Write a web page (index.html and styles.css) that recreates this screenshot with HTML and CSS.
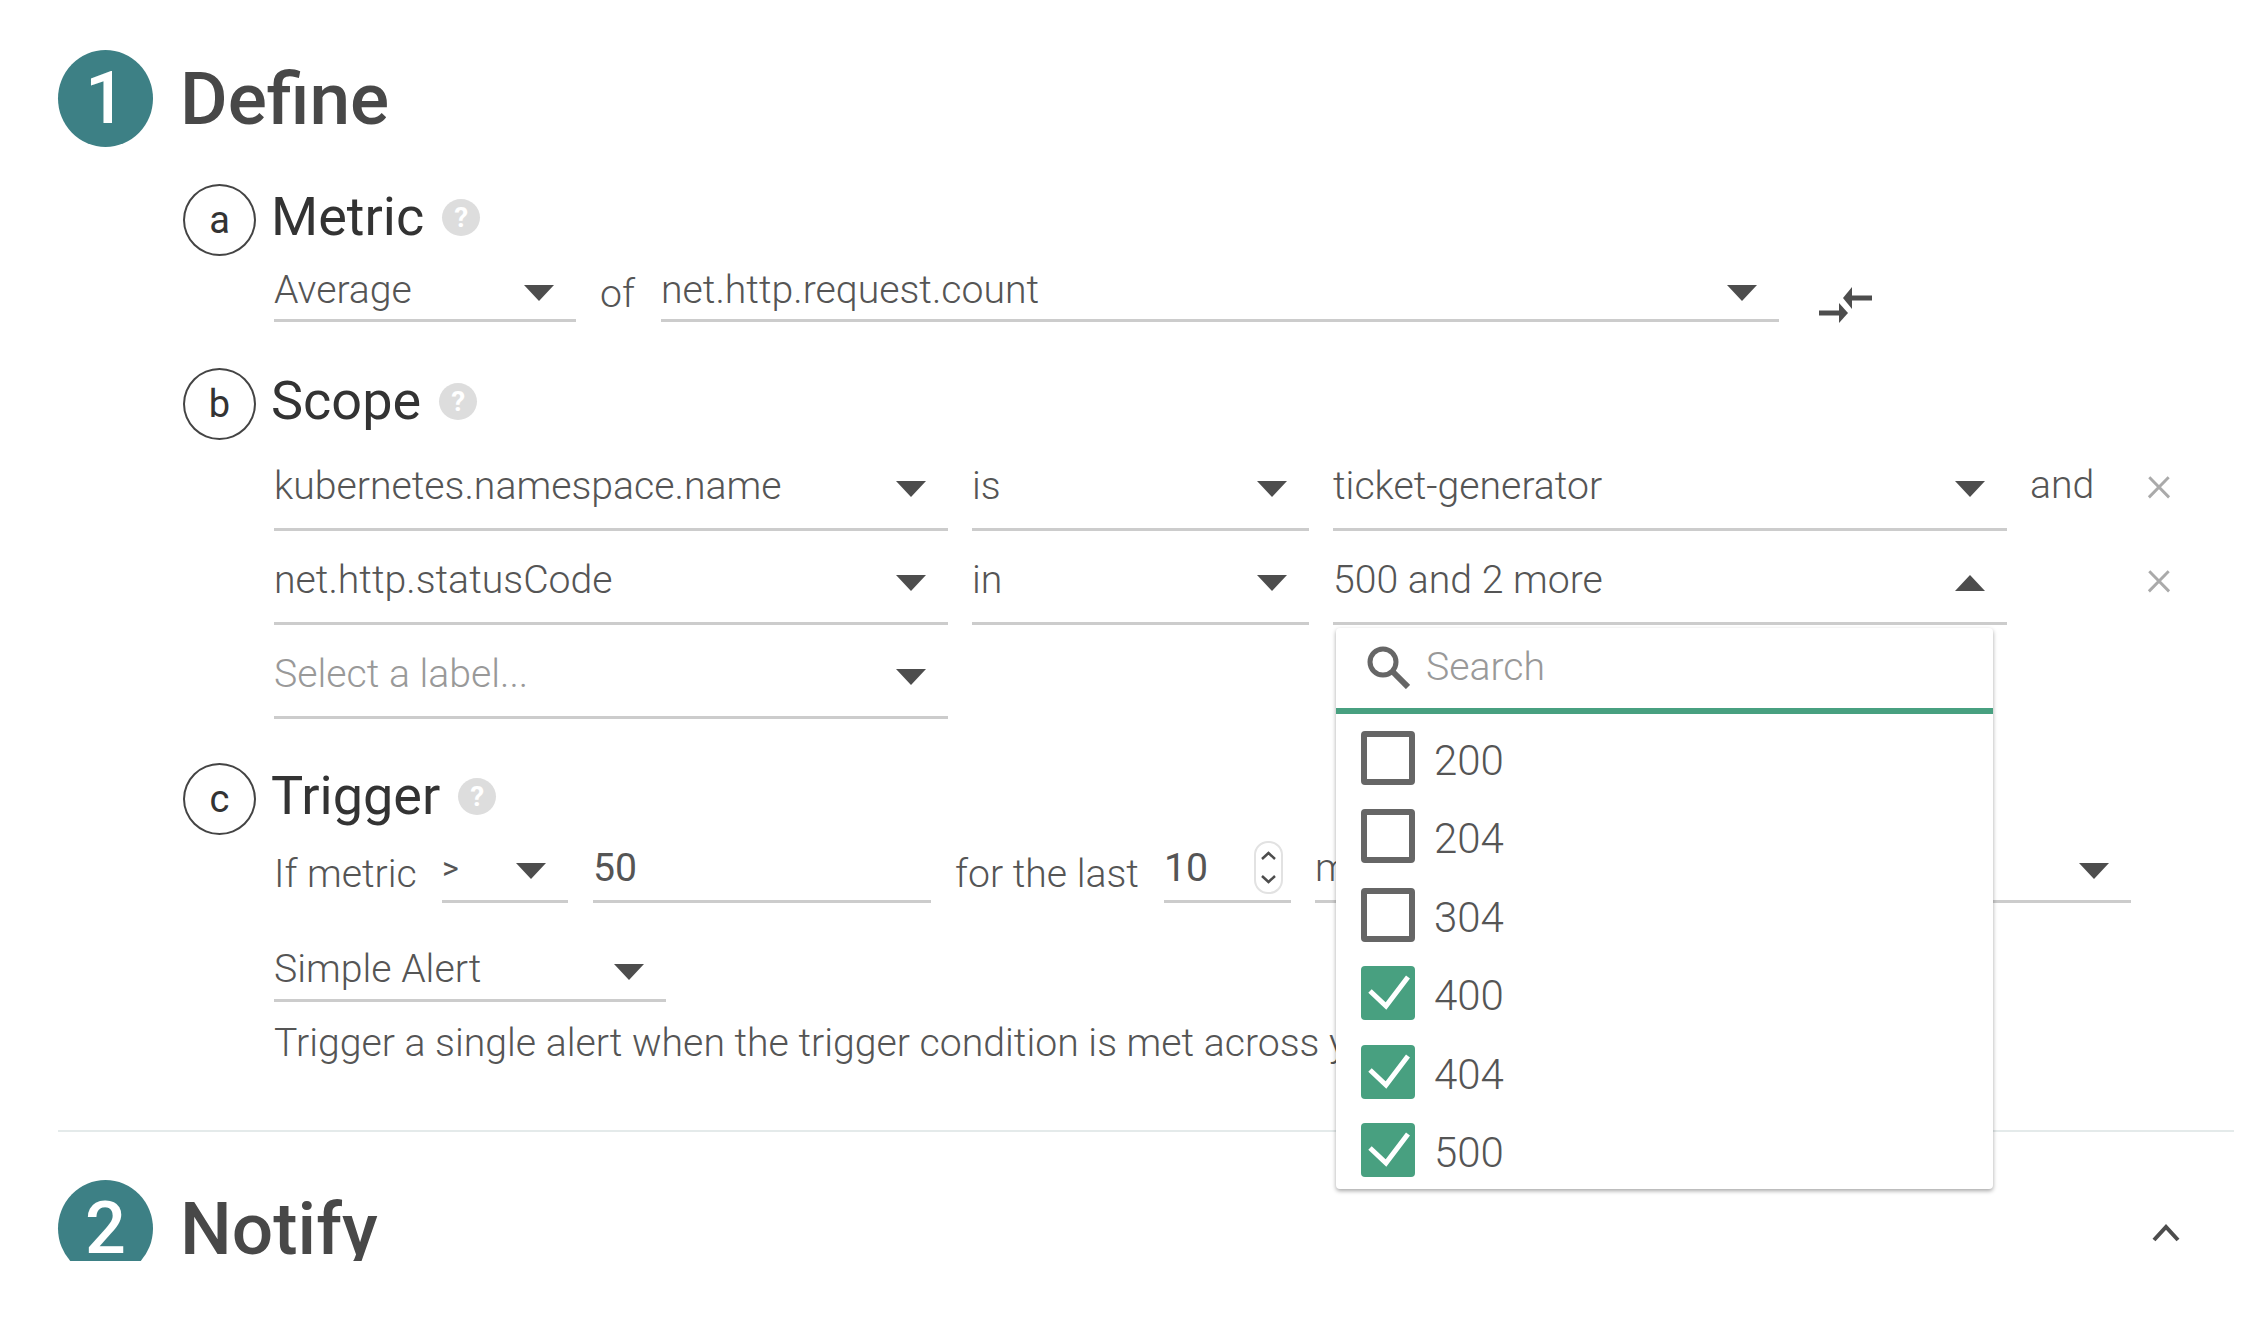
FILE: index.html
```html
<!DOCTYPE html>
<html>
  <head>
    <title>Define alert</title>
    <meta name="viewport" content="width=device-width, initial-scale=1" />
    <link rel="stylesheet" href="styles.css">
  </head>
  <body>
    <div class="page">
      <!-- Define -->
      <div class="section-head">
        <span class="step">1</span>
        <h1>Define</h1>
      </div>

      <div class="sub metric">
        <div class="sub-head">
          <span class="letter">a</span>
          <h2>Metric</h2>
          <span class="help">?</span>
        </div>
        <div class="row">
          <div class="field w-average"><span>Average</span><i class="arrow"></i></div>
          <span class="word word-of">of</span>
          <div class="field w-metric"><span>net.http.request.count</span><i class="arrow"></i></div>
          <svg class="compress" viewBox="0 0 56 40" width="56" height="40">
            <path d="M55 13H30" stroke="#4d4d4d" stroke-width="5" />
            <path d="M26 13l9-11v22z" fill="#4d4d4d" />
            <path d="M2 28h21" stroke="#4d4d4d" stroke-width="5" />
            <path d="M31 28l-9-10v20z" fill="#4d4d4d" />
          </svg>
        </div>
      </div>

      <div class="sub scope">
        <div class="sub-head">
          <span class="letter">b</span>
          <h2>Scope</h2>
          <span class="help">?</span>
        </div>
        <div class="row">
          <div class="field w-label"><span>kubernetes.namespace.name</span><i class="arrow"></i></div>
          <div class="field w-op"><span>is</span><i class="arrow"></i></div>
          <div class="field w-value"><span>ticket-generator</span><i class="arrow"></i></div>
          <span class="word word-and">and</span>
          <span class="remove">&times;</span>
        </div>
        <div class="row">
          <div class="field w-label"><span>net.http.statusCode</span><i class="arrow"></i></div>
          <div class="field w-op"><span>in</span><i class="arrow"></i></div>
          <div class="field w-value open">
            <span>500 and 2 more</span><i class="arrow up"></i>
            <div class="dropdown">
              <div class="search">
                <svg viewBox="0 0 44 44" width="44" height="44">
                  <circle cx="17" cy="17" r="13" fill="none" stroke="#666" stroke-width="5" />
                  <path d="M26 26l16 16" stroke="#666" stroke-width="6" />
                </svg>
                <span>Search</span>
              </div>
              <div class="options">
                <div class="option"><span class="check"></span>200</div>
                <div class="option"><span class="check"></span>204</div>
                <div class="option"><span class="check"></span>304</div>
                <div class="option"><span class="check on"><svg viewBox="0 0 54 54" width="54" height="54"><path d="M9 25l16 15L47 11" fill="none" stroke="#fff" stroke-width="5" /></svg></span>400</div>
                <div class="option"><span class="check on"><svg viewBox="0 0 54 54" width="54" height="54"><path d="M9 25l16 15L47 11" fill="none" stroke="#fff" stroke-width="5" /></svg></span>404</div>
                <div class="option"><span class="check on"><svg viewBox="0 0 54 54" width="54" height="54"><path d="M9 25l16 15L47 11" fill="none" stroke="#fff" stroke-width="5" /></svg></span>500</div>
              </div>
            </div>
          </div>
          <span class="word word-and"></span>
          <span class="remove">&times;</span>
        </div>
        <div class="row">
          <div class="field w-label placeholder"><span>Select a label...</span><i class="arrow"></i></div>
        </div>
      </div>

      <div class="sub trigger">
        <div class="sub-head">
          <span class="letter">c</span>
          <h2>Trigger</h2>
          <span class="help">?</span>
        </div>
        <div class="row">
          <span class="word word-if">If metric</span>
          <div class="field w-cmp"><span class="small">&gt;</span><i class="arrow"></i></div>
          <div class="field w-threshold"><span class="strong">50</span></div>
          <span class="word word-last">for the last</span>
          <div class="field w-duration">
            <span class="strong">10</span>
            <svg class="spinner" viewBox="0 0 29 53" width="29" height="53">
              <rect x="1" y="1" width="27" height="51" rx="13" fill="#fff" stroke="#e2e2e2" stroke-width="2" />
              <path d="M8 18l6.500-6 6.500 6M8 35l6.500 6 6.500-6" fill="none" stroke="#4d4d4d" stroke-width="2.500" />
            </svg>
          </div>
          <div class="field w-unit"><span>minutes</span><i class="arrow"></i></div>
        </div>
        <div class="row">
          <div class="field w-alert"><span>Simple Alert</span><i class="arrow"></i></div>
        </div>
        <p class="description">Trigger a single alert when the trigger condition is met across your entire scope.</p>
      </div>

      <hr class="divider" />

      <!-- Notify -->
      <div class="section-head">
        <span class="step">2</span>
        <h1>Notify</h1>
        <svg class="chevron" viewBox="0 0 28 20" width="28" height="20">
          <path d="M2 17L14 4l12 13" fill="none" stroke="#4d4d4d" stroke-width="4" />
        </svg>
      </div>
    </div>
  </body>
</html>
```

FILE: styles.css
```css
* {
  box-sizing: border-box;
}

body {
  margin: 0;
  background: #fff;
  color: #555;
  font-family: Roboto, "Liberation Sans", sans-serif;
  font-weight: 300;
  font-size: 39.200px;
}

.page {
  height: 1261px;
  padding: 50px 32px 0 58px;
  overflow: hidden;
}

/* Section headings */
.section-head {
  display: flex;
  align-items: center;
  gap: 27px;
}

.section-head h1 {
  margin: 0;
  font-size: 73px;
  font-weight: 500;
  color: #484848;
}

.step {
  display: flex;
  justify-content: center;
  align-items: center;
  flex: none;
  width: 95px;
  height: 97px;
  border-radius: 50%;
  background: #3d8085;
  color: #fff;
  font-size: 72px;
  font-weight: 500;
}

.chevron {
  margin-left: auto;
  margin-right: 54px;
  margin-top: 8px;
}

/* Sub sections */
.sub {
  margin-left: 125px;
  padding-left: 91px;
}

.sub-head {
  display: flex;
  align-items: center;
  height: 72px;
  margin-left: -91px;
}

.sub-head h2 {
  margin: 0 0 8px 15px;
  font-size: 54px;
  font-weight: 400;
  color: #333;
}

.letter {
  display: flex;
  justify-content: center;
  align-items: center;
  flex: none;
  width: 73px;
  height: 72px;
  border: 2px solid #444;
  border-radius: 50%;
  color: #333;
  font-size: 38px;
  font-weight: 400;
}

.help {
  display: flex;
  justify-content: center;
  align-items: center;
  width: 38px;
  height: 37px;
  margin-left: 18px;
  margin-bottom: 6px;
  border-radius: 50%;
  background: #ddd;
  color: #fff;
  font-size: 28px;
  font-weight: 700;
}

.metric {
  margin-top: 37px;
}

.scope {
  margin-top: 46px;
}

.trigger {
  margin-top: 44px;
}

/* Rows and fields */
.row {
  display: flex;
  align-items: flex-end;
}

.field {
  position: relative;
  display: flex;
  align-items: flex-start;
  flex: none;
  line-height: 48px;
  border-bottom: 3px solid #ccc;
}

.field > span {
  margin-top: 2px;
}

.field .arrow {
  margin-left: auto;
  margin-right: 22px;
  margin-top: 21px;
}

.arrow {
  display: block;
  flex: none;
  width: 0;
  height: 0;
  border-left: 15px solid transparent;
  border-right: 15px solid transparent;
  border-top: 16px solid #4d4d4d;
}

.arrow.up {
  border-top: 0;
  border-bottom: 16px solid #4d4d4d;
}

.placeholder {
  color: #999;
}

.word {
  flex: none;
  line-height: 48px;
  white-space: nowrap;
}

.metric .row {
  margin-top: 8px;
}

.metric .field {
  height: 58px;
}

.w-average {
  width: 302px;
}

.word-of {
  width: 85px;
  padding-left: 24px;
  padding-bottom: 4px;
}

.w-metric {
  width: 1118px;
}

.compress {
  flex: none;
  margin-left: 38px;
  margin-bottom: -3px;
}

.scope .row {
  margin-top: 23px;
}

.scope .sub-head + .row {
  margin-top: 20px;
}

.scope .field {
  height: 71px;
}

.w-label {
  width: 674px;
}

.w-op {
  width: 337px;
  margin-left: 24px;
}

.w-value {
  width: 674px;
  margin-left: 24px;
}

.word-and {
  width: 135px;
  padding-left: 23px;
  align-self: flex-start;
  margin-top: 1px;
}

.remove {
  width: 34px;
  align-self: flex-start;
  color: #aaa;
  font-size: 52px;
  line-height: 48px;
  text-align: center;
}

.trigger .row {
  margin-top: 40px;
}

.trigger .sub-head + .row {
  margin-top: 7px;
}

.trigger .field {
  height: 61px;
}

.word-if {
  width: 168px;
  margin-bottom: 3px;
  padding-bottom: 2px;
}

.word-last {
  width: 233px;
  padding-left: 24px;
  margin-bottom: 3px;
  padding-bottom: 2px;
}

.small {
  font-size: 32px;
  font-weight: 400;
}

.strong {
  font-weight: 400;
}

.w-cmp {
  width: 126px;
}

.w-threshold {
  width: 338px;
  margin-left: 25px;
}

.w-duration {
  width: 127px;
}

.spinner {
  position: absolute;
  top: -1px;
  right: 8px;
}

.w-unit {
  width: 816px;
  margin-left: 24px;
}

.trigger .w-alert {
  width: 392px;
  height: 59px;
}

.description {
  margin: 17px 0 0;
  line-height: 48px;
  white-space: nowrap;
}

.divider {
  height: 2px;
  margin: 63px 0 48px;
  border: 0;
  background: #e4eaea;
}

/* Multi select dropdown */
.dropdown {
  position: absolute;
  top: 74px;
  left: 3px;
  z-index: 2;
  width: 657px;
  height: 561px;
  border-radius: 4px;
  background: #fff;
  box-shadow: 0 2px 4px rgba(0, 0, 0, 0.35);
}

.search {
  display: flex;
  align-items: center;
  gap: 16px;
  height: 86px;
  padding: 0 0 2px 30px;
  border-bottom: 6px solid #48a080;
  color: #999;
}

.options {
  padding-top: 6px;
}

.option {
  display: flex;
  align-items: center;
  gap: 19px;
  height: 78.500px;
  padding-top: 3px;
  padding-left: 25px;
  font-size: 42px;
}

.check {
  flex: none;
  width: 54px;
  height: 54px;
  margin-bottom: 6px;
  border: 6px solid #666;
  border-radius: 4px;
}

.check.on {
  border: 0;
  background: #48a080;
}

.check svg {
  display: block;
}
```
